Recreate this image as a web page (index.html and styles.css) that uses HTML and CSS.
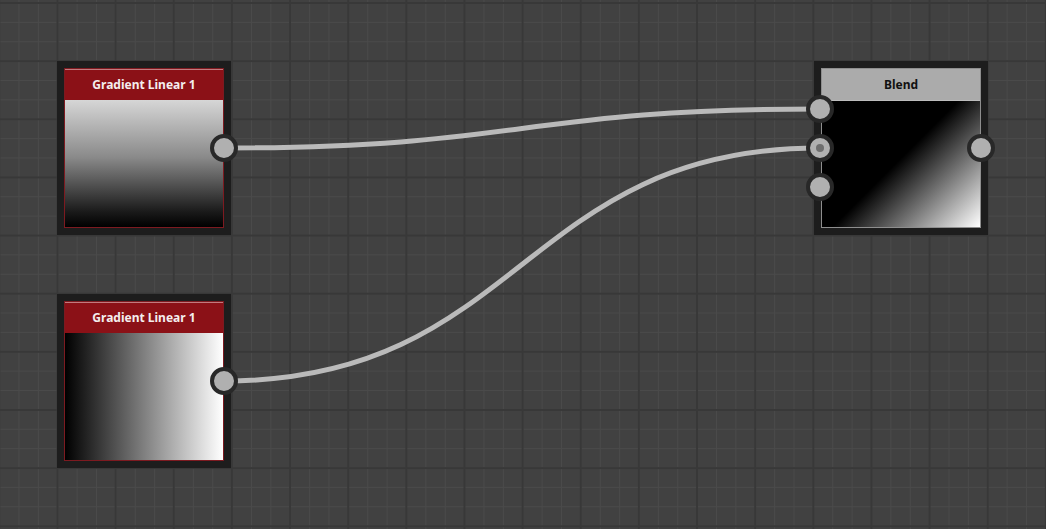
FILE: index.html
```html
<!DOCTYPE html>
<html>
<head>
<meta charset="utf-8">
<link rel="stylesheet" href="styles.css">
</head>
<body>
<div class="canvas">
  <svg class="wires" width="1046" height="529" viewBox="0 0 1046 529">
    <path d="M224 148 C 522 148, 522 109, 820 109" />
    <path d="M224 381 C 522 381, 522 148, 820 148" />
  </svg>

  <div class="node node-a">
    <div class="inner red">
      <div class="head">Gradient Linear 1</div>
      <div class="img grad-v"></div>
    </div>
    <div class="port out"></div>
  </div>

  <div class="node node-b">
    <div class="inner red">
      <div class="head">Gradient Linear 1</div>
      <div class="img grad-h"></div>
    </div>
    <div class="port out"></div>
  </div>

  <div class="node node-c">
    <div class="inner grey">
      <div class="head">Blend</div>
      <div class="img grad-d"></div>
    </div>
    <div class="port in in1"></div>
    <div class="port in in2 dot"></div>
    <div class="port in in3"></div>
    <div class="port out"></div>
  </div>
</div>
</body>
</html>
```

FILE: styles.css
```css
html, body {
  margin: 0;
  padding: 0;
}
body {
  width: 1046px;
  height: 529px;
  overflow: hidden;
  background: #404040;
  font-family: "Noto Sans", "Open Sans", sans-serif;
}
.canvas {
  position: relative;
  width: 1046px;
  height: 529px;
  background-color: #414141;
  background-image:
    linear-gradient(to right, #383838 2px, transparent 2px),
    linear-gradient(to bottom, #383838 2px, transparent 2px),
    linear-gradient(to right, #4a4a4a 1px, transparent 1px),
    linear-gradient(to bottom, #4a4a4a 1px, transparent 1px);
  background-size:
    58.15px 58.15px,
    58.15px 58.15px,
    19.383px 19.383px,
    19.383px 19.383px;
  background-position:
    56.5px 0,
    0 2px,
    18.5px 0,
    0 2.5px;
}
.wires {
  position: absolute;
  left: 0;
  top: 0;
}
.wires path {
  fill: none;
  stroke: #bababa;
  stroke-width: 5;
}
.node {
  position: absolute;
  padding: 7px;
  background: #1d1d1d;
}
.node-a { left: 57px; top: 61px; }
.node-b { left: 57px; top: 294px; }
.node-c { left: 814px; top: 61px; }

.inner {
  width: 160px;
  height: 160px;
  box-sizing: border-box;
  display: flex;
  flex-direction: column;
  border: 1px solid;
}
.inner.red { border-color: #7d1a20; }
.inner.grey { border-color: #8e8e8e; }

.head {
  height: 31px;
  flex: none;
  display: flex;
  align-items: center;
  justify-content: center;
  font-size: 12px;
  font-weight: 700;
  letter-spacing: 0;
}
.red .head {
  background: #8b1117;
  color: #f4eeee;
  box-shadow: inset 0 1px 0 #c27a7e;
}
.grey .head {
  background: #ababab;
  color: #111;
  border-bottom: 1px solid #bdbdbd;
}
.img { flex: 1; }
.grad-v { background: linear-gradient(to bottom, #d6d6d6 0%, #8a8a8a 45%, #1a1a1a 88%, #000 100%); }
.grad-h { background: linear-gradient(to right, #000 0%, #fff 100%); }
.grad-d { background: linear-gradient(135deg, #000 48%, #fff 100%); }

.port {
  position: absolute;
  width: 20px;
  height: 20px;
  border: 4.5px solid #282828;
  border-radius: 50%;
  background: #b0b0b0;
}
.node-a .out, .node-b .out { left: 152.5px; top: 72.5px; }
.node-c .out { left: 152.5px; top: 72.5px; }
.in1 { left: -8.5px; top: 33.5px; }
.in2 { left: -8.5px; top: 72.5px; }
.in3 { left: -8.5px; top: 111.5px; }
.dot::after {
  content: "";
  position: absolute;
  left: 6px;
  top: 6px;
  width: 8px;
  height: 8px;
  border-radius: 50%;
  background: #6e6e6e;
}
```
